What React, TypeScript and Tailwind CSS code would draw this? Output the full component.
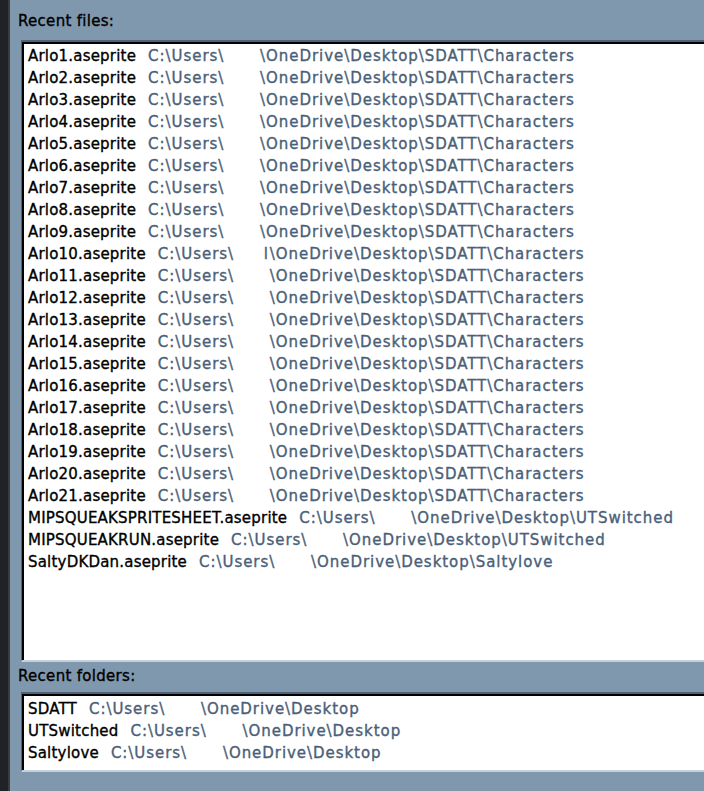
import React from "react";

type Entry = { name: string; dir: string; stray?: string };

const CHARS = "\\OneDrive\\Desktop\\SDATT\\Characters";

const recentFiles: Entry[] = [
  ...Array.from({ length: 21 }, (_, i) => ({
    name: `Arlo${i + 1}.aseprite`,
    dir: CHARS,
    stray: i === 9 ? "l" : undefined,
  })),
  { name: "MIPSQUEAKSPRITESHEET.aseprite", dir: "\\OneDrive\\Desktop\\UTSwitched" },
  { name: "MIPSQUEAKRUN.aseprite", dir: "\\OneDrive\\Desktop\\UTSwitched" },
  { name: "SaltyDKDan.aseprite", dir: "\\OneDrive\\Desktop\\Saltylove" },
];

const recentFolders: Entry[] = [
  { name: "SDATT", dir: "\\OneDrive\\Desktop" },
  { name: "UTSwitched", dir: "\\OneDrive\\Desktop" },
  { name: "Saltylove", dir: "\\OneDrive\\Desktop" },
];

function Row({ entry }: { entry: Entry }) {
  return (
    <div className="flex items-baseline whitespace-nowrap leading-[22px] h-[22px]">
      <span className="text-black tracking-[0.2px]">{entry.name}</span>
      <span className="ml-[12px] text-[#4a6078] tracking-[0.95px] flex items-baseline">
        <span className="inline-flex w-[112px] justify-between pr-[1px]">
          <span>C:\Users\</span>
          {entry.stray && <span>{entry.stray}</span>}
        </span>
        <span>{entry.dir}</span>
      </span>
    </div>
  );
}

function ListBox({
  items,
  height,
  padTop,
}: {
  items: Entry[];
  height: string;
  padTop: string;
}) {
  return (
    <div className="ml-[3px] -mr-[12px] border-t-2 border-l border-b-2 border-t-[#4f6277] border-l-[#4f6277] border-b-[#c4d1dc]">
      <div className={`border-t-2 border-l-2 border-black bg-white pl-[4px] ${height} ${padTop}`}>
        {items.map((e) => (
          <Row key={e.name} entry={e} />
        ))}
      </div>
    </div>
  );
}

export default function App() {
  return (
    <div
      className="flex w-[704px] h-[791px] overflow-hidden text-[15px] [-webkit-text-stroke:0.35px_currentColor]"
      style={{ fontFamily: '"DejaVu Sans", "Liberation Sans", sans-serif' }}
    >
      <div className="w-[8px] bg-[#212226]" />
      <div className="w-[2px] bg-[#393b41]" />
      <div className="flex-1 min-w-0 bg-[#7f98ae] pl-[8px] flex flex-col">
        <div className="pt-[10px] leading-[22px] h-[32px] text-black tracking-[0.3px]">
          Recent files:
        </div>
        <div className="mt-[8px]">
          <ListBox items={recentFiles} height="h-[618px]" padTop="pt-[1px]" />
        </div>
        <div className="mt-[3px] leading-[22px] h-[22px] text-black tracking-[0.3px]">
          Recent folders:
        </div>
        <div className="mt-[5px]">
          <ListBox items={recentFolders} height="h-[76px]" padTop="pt-[2px]" />
        </div>
      </div>
    </div>
  );
}
